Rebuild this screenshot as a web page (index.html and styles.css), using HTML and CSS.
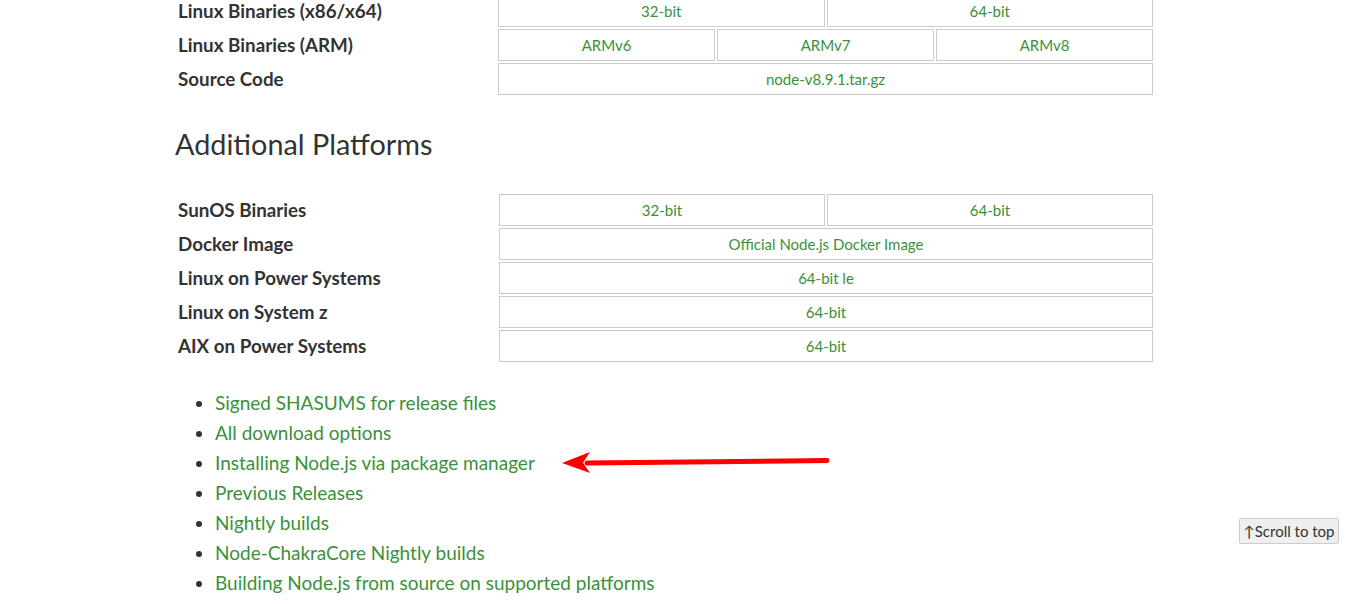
FILE: index.html
```html
<!DOCTYPE html>
<html lang="en">
<head>
<meta charset="utf-8">
<title>Downloads</title>
<link rel="stylesheet" href="styles.css">
</head>
<body>
<main class="page">
  <div class="dl-table">
    <div class="row">
      <div class="label">Linux Binaries (x86/x64)</div>
      <div class="cells">
        <a class="cell" href="#">32-bit</a>
        <a class="cell" href="#">64-bit</a>
      </div>
    </div>
    <div class="row">
      <div class="label">Linux Binaries (ARM)</div>
      <div class="cells">
        <a class="cell" href="#">ARMv6</a>
        <a class="cell" href="#">ARMv7</a>
        <a class="cell" href="#">ARMv8</a>
      </div>
    </div>
    <div class="row">
      <div class="label">Source Code</div>
      <div class="cells">
        <a class="cell" href="#">node-v8.9.1.tar.gz</a>
      </div>
    </div>
  </div>

  <h2 class="section-title">Additional Platforms</h2>

  <div class="dl-table second">
    <div class="row">
      <div class="label">SunOS Binaries</div>
      <div class="cells">
        <a class="cell" href="#">32-bit</a>
        <a class="cell" href="#">64-bit</a>
      </div>
    </div>
    <div class="row">
      <div class="label">Docker Image</div>
      <div class="cells"><a class="cell" href="#">Official Node.js Docker Image</a></div>
    </div>
    <div class="row">
      <div class="label">Linux on Power Systems</div>
      <div class="cells"><a class="cell" href="#">64-bit le</a></div>
    </div>
    <div class="row">
      <div class="label">Linux on System z</div>
      <div class="cells"><a class="cell" href="#">64-bit</a></div>
    </div>
    <div class="row">
      <div class="label">AIX on Power Systems</div>
      <div class="cells"><a class="cell" href="#">64-bit</a></div>
    </div>
  </div>

  <ul class="links">
    <li><a href="#">Signed SHASUMS for release files</a></li>
    <li><a href="#">All download options</a></li>
    <li class="with-arrow"><a href="#">Installing Node.js via package manager</a>
      <svg class="arrow" width="280" height="30" viewBox="0 0 280 30">
        <line x1="26" y1="15" x2="266" y2="12.5" stroke="#ff0000" stroke-width="5" stroke-linecap="round"/>
        <path d="M1 15 L29 4 L22 14.7 L29 25 Z" fill="#ff0000"/>
      </svg>
    </li>
    <li><a href="#">Previous Releases</a></li>
    <li><a href="#">Nightly builds</a></li>
    <li><a href="#">Node-ChakraCore Nightly builds</a></li>
    <li><a href="#">Building Node.js from source on supported platforms</a></li>
  </ul>
</main>
<a class="scroll-top" href="#">↑Scroll to top</a>
</body>
</html>
```
FILE: styles.css
```css
html, body {
  margin: 0;
  padding: 0;
  background: #fff;
}
body {
  font-family: "Lato", "Noto Sans", sans-serif;
  color: #333;
  overflow: hidden;
}
a {
  color: #3a913a;
  text-decoration: none;
}
.page {
  width: 977px;
  margin: -5px 0 0 176px;
}
.dl-table {
  display: flex;
  flex-direction: column;
  gap: 2px;
}
.row {
  display: grid;
  grid-template-columns: 322px 1fr;
  height: 32px;
}
.second .row {
  grid-template-columns: 323px 1fr;
}
.label {
  padding-left: 2px;
  font-weight: bold;
  font-size: 18.8px;
  line-height: 32px;
  color: #333;
  white-space: nowrap;
}
.cells {
  display: flex;
  gap: 2px;
}
.cell {
  flex: 1;
  border: 1px solid #ccc;
  text-align: center;
  font-size: 15px;
  line-height: 30px;
  color: #3a913a;
}
.section-title {
  margin: 29px 0 0 -1px;
  height: 70px;
  font-size: 28.8px;
  font-weight: normal;
  line-height: 40px;
  color: #333;
}
.links {
  margin: 26px 0 0 0;
  padding: 0 0 0 39px;
  font-size: 19px;
  line-height: 30px;
}
.links li {
  position: relative;
}
.arrow {
  position: absolute;
  left: 346px;
  top: 0;
}
.scroll-top {
  position: fixed;
  left: 1239px;
  top: 518px;
  width: 98px;
  height: 24px;
  border: 1px solid #ccc;
  border-radius: 2px;
  background: #efefef;
  color: #333;
  font-size: 15px;
  line-height: 24px;
  text-align: center;
}
```
